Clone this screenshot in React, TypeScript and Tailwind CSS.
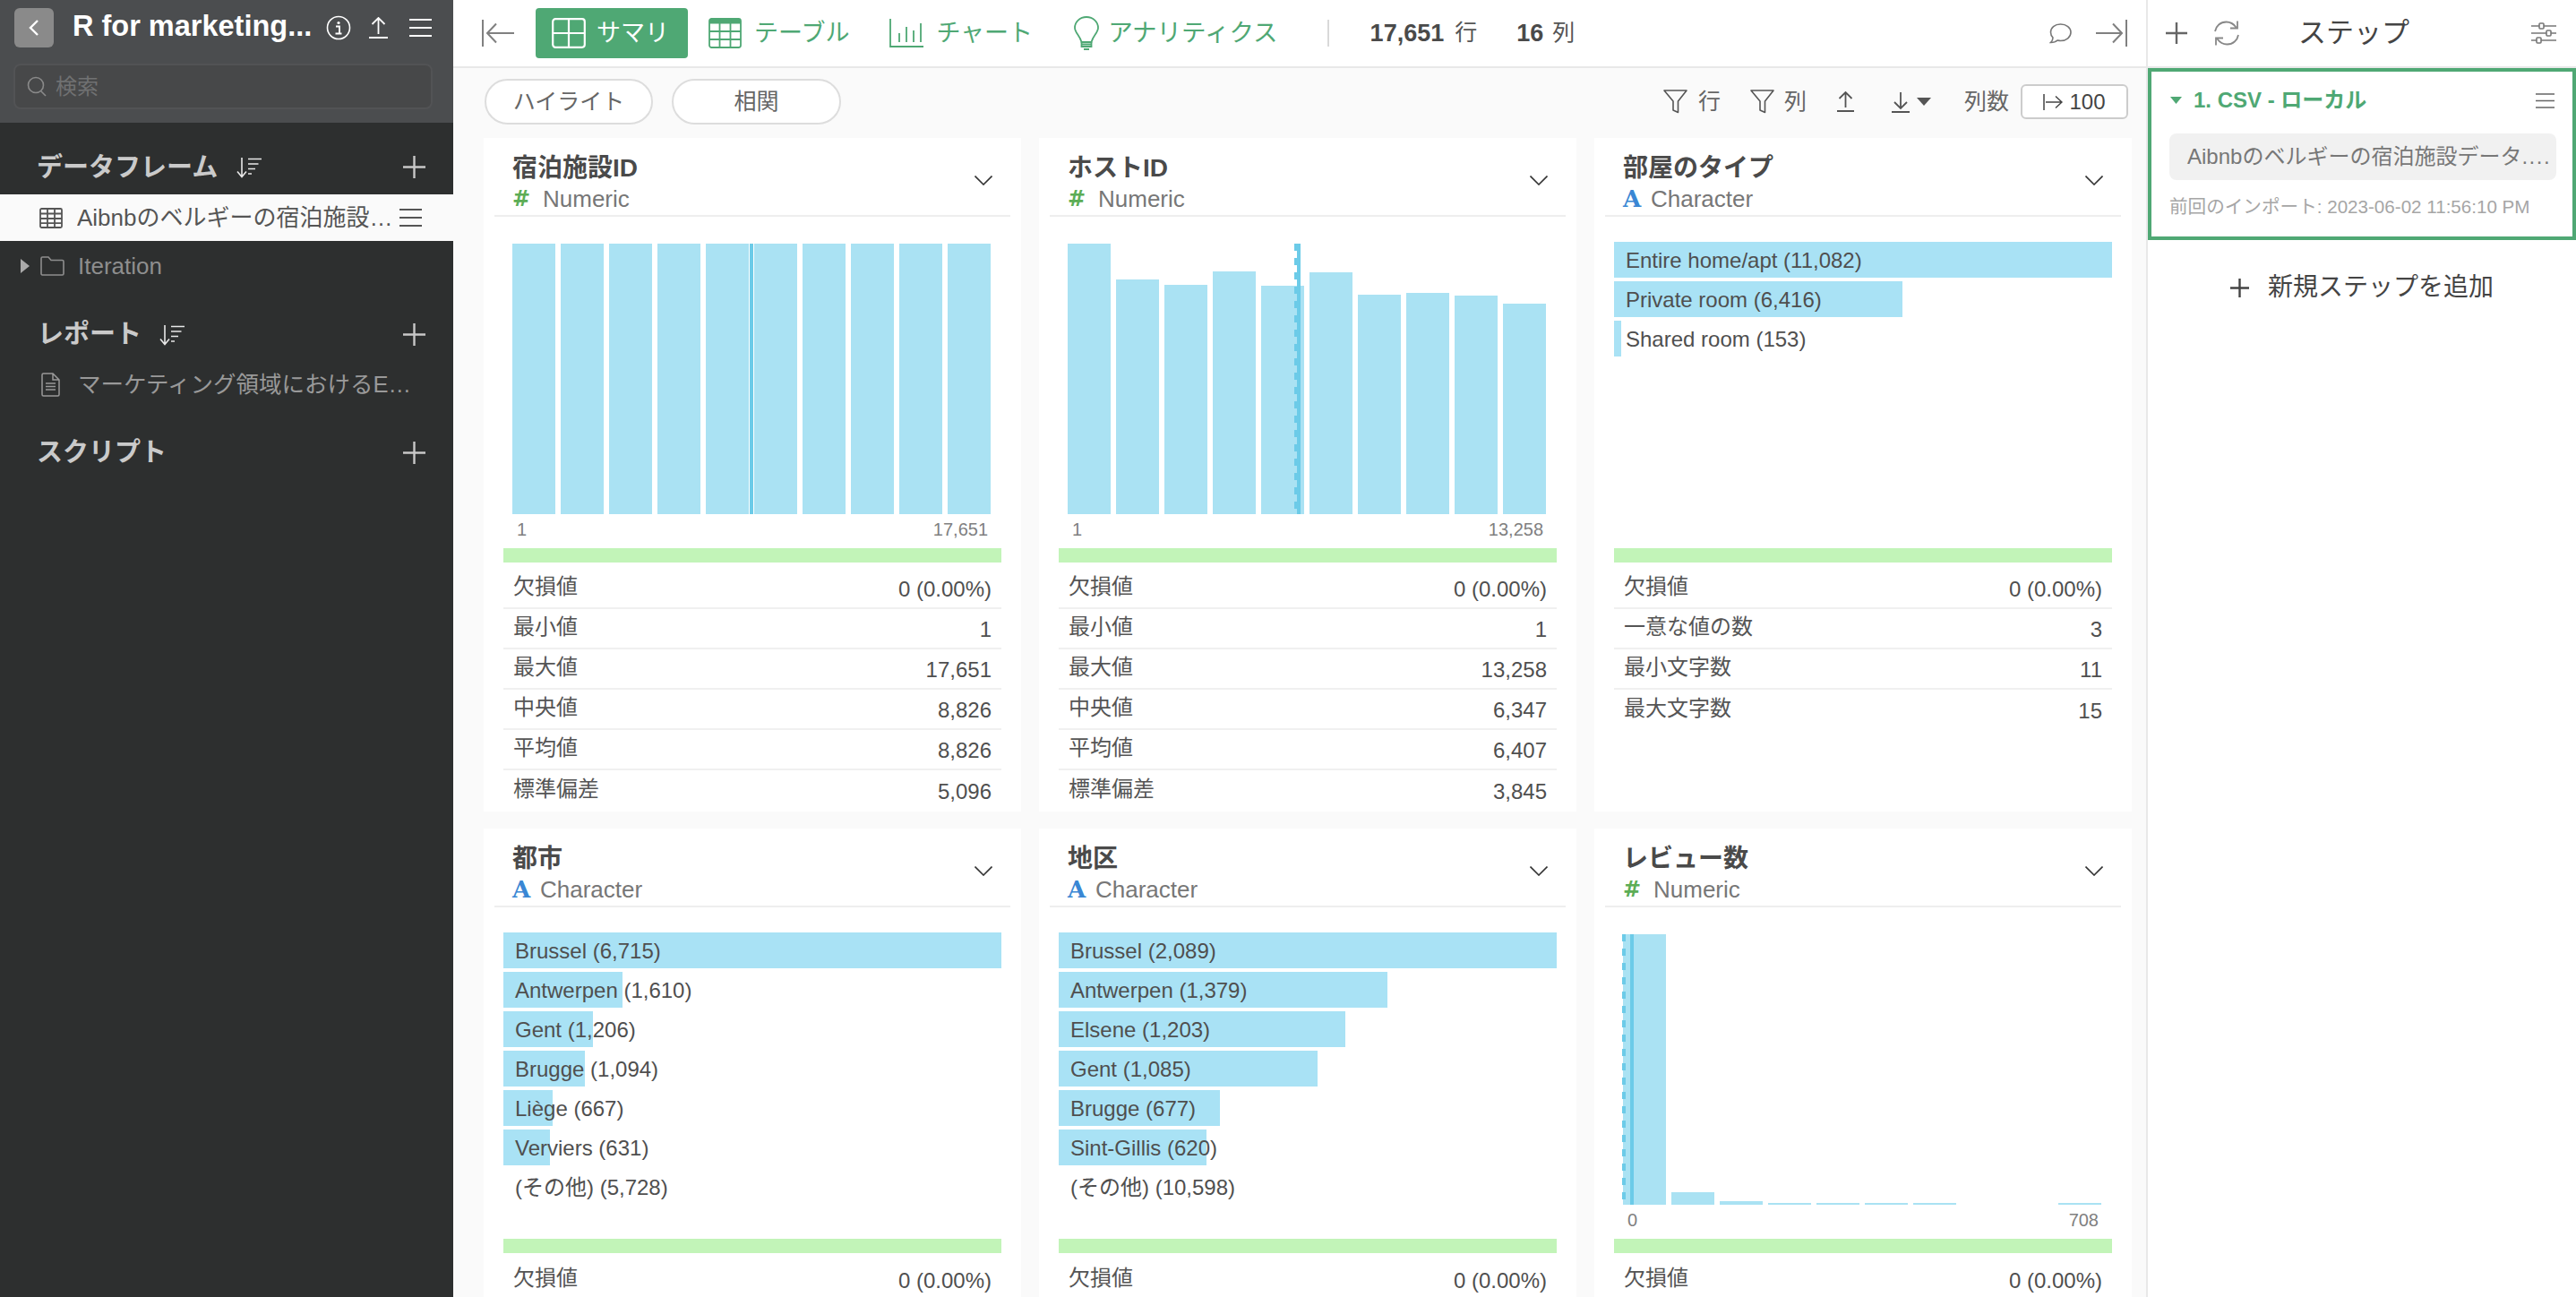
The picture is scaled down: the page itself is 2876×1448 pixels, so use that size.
import React from "react";

const FONT = "font-['Liberation_Sans','Noto_Sans_CJK_JP',sans-serif]";

function Burger({ w = 25, h = 20, c = "#fff", s = 2 }: { w?: number; h?: number; c?: string; s?: number }) {
  return (
    <svg width={w} height={h} viewBox={`0 0 ${w} ${h}`} fill="none" stroke={c} strokeWidth={s} className="shrink-0">
      <path d={`M0 1H${w}M0 ${h / 2}H${w}M0 ${h - 1}H${w}`} />
    </svg>
  );
}

function Plus({ size = 24, c = "#c8c8c8", s = 2.4 }: { size?: number; c?: string; s?: number }) {
  return (
    <svg width={size} height={size} viewBox={`0 0 ${size} ${size}`} fill="none" stroke={c} strokeWidth={s} className="shrink-0">
      <path d={`M${size / 2} 0V${size}M0 ${size / 2}H${size}`} />
    </svg>
  );
}

function SortIcon() {
  return (
    <svg width="28" height="24" viewBox="0 0 28 24" fill="none" stroke="#e8e8e8" strokeWidth="1.6" className="shrink-0">
      <path d="M6 1V22M1 16.5L6 22.5L11 16.5" />
      <path d="M13 2.5H28M13 8H24.5M13 13.5H21M13 19H17" />
    </svg>
  );
}

function UpIcon({ c = "#fff", w = 21, h = 24 }: { c?: string; w?: number; h?: number }) {
  const m = w / 2;
  return (
    <svg width={w} height={h} viewBox={`0 0 ${w} ${h}`} fill="none" stroke={c} strokeWidth="1.8" className="shrink-0">
      <path d={`M0 ${h - 1}H${w}M${m} ${h - 5}V1M${m - 7} 8L${m} 1L${m + 7} 8`} />
    </svg>
  );
}

function DownIcon({ c = "#555" }: { c?: string }) {
  return (
    <svg width="20" height="24" viewBox="0 0 20 24" fill="none" stroke={c} strokeWidth="1.8" className="shrink-0">
      <path d="M0 23H20M10 1V19M3 12L10 19L17 12" />
    </svg>
  );
}

function Funnel() {
  return (
    <svg width="27" height="27" viewBox="0 0 27 27" fill="none" stroke="#555" strokeWidth="1.6" className="shrink-0">
      <path d="M1 1H26L16.5 13V25.5L11 23V13Z" strokeLinejoin="round" />
    </svg>
  );
}

function TypeLine({ type }: { type: "Numeric" | "Character" }) {
  return type === "Numeric" ? (
    <div className="flex items-center h-[28px]">
      <span className="w-[34px] text-[24px] leading-[28px] font-bold text-[#5cad56] font-['DejaVu_Sans',sans-serif]">#</span>
      <span className="text-[26px] leading-[28px] text-[#777777]">Numeric</span>
    </div>
  ) : (
    <div className="flex items-center h-[28px]">
      <span className="w-[31px] text-[26px] leading-[28px] font-bold text-[#3a87d4] font-['DejaVu_Serif',serif]">A</span>
      <span className="text-[26px] leading-[28px] text-[#777777]">Character</span>
    </div>
  );
}

function Histogram({
  bars,
  lo,
  hi,
  solid,
  dash,
}: {
  bars: number[];
  lo: string;
  hi: string;
  solid: number;
  dash: number;
}) {
  return (
    <div className="mx-[32px] pt-[30px] h-[370px]">
      <div className="relative h-[302px] flex items-end gap-[6px]">
        {bars.map((b, i) => (
          <div key={i} className="w-[48px] bg-[#aae2f3]" style={{ height: b }} />
        ))}
        <svg
          width="4"
          height="302"
          className="absolute top-0"
          style={{ left: dash }}
          fill="none"
          stroke="#6ccbe8"
          strokeWidth="8"
        >
          <line x1="2" y1="0" x2="2" y2="302" strokeDasharray="8 8" />
        </svg>
        <div className="absolute top-0 w-[4px] h-[302px] bg-[#6ccbe8]" style={{ left: solid }} />
      </div>
      <div className="flex justify-between px-[5px] pt-[7px] text-[20px] leading-[20px] text-[#808080]">
        <span>{lo}</span>
        <span>{hi}</span>
      </div>
    </div>
  );
}

function BarList({ items, max }: { items: [string, number][]; max: number }) {
  return (
    <div className="mx-[22px] pt-[28px] h-[370px] flex flex-col gap-[4px]">
      {items.map(([label, n]) => (
        <div key={label} className="relative h-[40px] shrink-0 flex items-center">
          <div className="absolute left-0 top-0 h-[40px] bg-[#a9e2f5]" style={{ width: (n / max) * 556 }} />
          <span className="relative pl-[13px] pt-[2px] text-[24px] text-[#4f4f4f] whitespace-nowrap">{label}</span>
        </div>
      ))}
    </div>
  );
}

function Card({
  title,
  type,
  children,
  stats,
}: {
  title: string;
  type: "Numeric" | "Character";
  children: React.ReactNode;
  stats: [string, string][];
}) {
  return (
    <div className="h-[752px] bg-white">
      <div className="mx-[12px] h-[88px] border-b-2 border-[#eeeeee] flex">
        <div className="pl-[20px] pt-[16px] flex-1">
          <div className="text-[28px] leading-[36px] font-bold text-[#4a4a4a] mb-[2px]">{title}</div>
          <TypeLine type={type} />
        </div>
        <div className="pt-[42px] pr-[20px]">
          <svg width="20" height="11" viewBox="0 0 20 11" fill="none" stroke="#333" strokeWidth="1.6">
            <path d="M0.5 0.5L10 10L19.5 0.5" />
          </svg>
        </div>
      </div>
      {children}
      <div className="mx-[22px] h-[16px] bg-[#c2f4b8]" />
      <div className="mx-[22px]">
        {stats.map(([k, v], i) => (
          <div
            key={k}
            className={`flex justify-between items-center px-[11px] text-[24px] text-[#4f4f4f] ${
              i === 0 ? "h-[52px] pt-[7px]" : "h-[45px]"
            } ${i < stats.length - 1 ? "border-b-2 border-[#f0f0f0]" : ""}`}
          >
            <span className="pb-[3px] leading-[32px] text-[#555555]">{k}</span>
            <span className="pt-[3px] leading-[32px]">{v}</span>
          </div>
        ))}
      </div>
    </div>
  );
}

function Sidebar() {
  return (
    <div className="w-[506px] h-full shrink-0 bg-[#2d2f2f]">
      <div className="h-[137px] bg-[#4b4d4f]">
        <div className="flex items-center pt-[9px] pl-[16px] h-[53px]">
          <div className="w-[44px] h-[44px] rounded-md bg-[#8a8a8a] flex items-center justify-center">
            <svg width="12" height="18" viewBox="0 0 12 18" fill="none" stroke="#fff" strokeWidth="2.4">
              <path d="M10 1L2 9L10 17" />
            </svg>
          </div>
          <div className="ml-[21px] w-[267px] text-[32.5px] leading-[40px] font-bold text-white whitespace-nowrap mt-[-4px]">
            R for marketing...
          </div>
          <svg width="28" height="28" viewBox="0 0 28 28" fill="none" className="ml-[16px] shrink-0">
            <circle cx="14" cy="14" r="12.5" stroke="#fff" strokeWidth="1.6" />
            <circle cx="14" cy="8.5" r="1.6" fill="#fff" />
            <path d="M11 12.5H15V20M10.5 20.5H17.5" stroke="#fff" strokeWidth="1.8" />
          </svg>
          <div className="ml-[20px]">
            <UpIcon />
          </div>
          <div className="ml-[24px]">
            <Burger />
          </div>
        </div>
        <div className="mt-[18px] ml-[15px] w-[468px] h-[51px] rounded-lg bg-[#474849] border-2 border-[#525355] flex items-center pl-[13px]">
          <svg width="22" height="24" viewBox="0 0 22 24" fill="none" stroke="#8a8a8a" strokeWidth="1.6" className="shrink-0">
            <circle cx="10" cy="10" r="8.5" />
            <path d="M15.5 16.5L21 22" />
          </svg>
          <span className="ml-[10px] text-[24px] text-[#707172]">検索</span>
        </div>
      </div>

      <div className="mt-[29px] h-[40px] mb-[11px] flex items-center pl-[41px] pr-[31px] text-[#cacaca]">
        <span className="text-[29px] leading-[40px] font-bold mt-[2px]">データフレーム</span>
        <span className="ml-[21px] mt-[2px]">
          <SortIcon />
        </span>
        <span className="ml-auto">
          <Plus size={25} />
        </span>
      </div>
      <div className="h-[52px] bg-[#fafafa] flex items-center pl-[44px] pr-[35px]">
        <svg width="26" height="23" viewBox="0 0 26 23" fill="none" stroke="#555" strokeWidth="1.8" className="shrink-0">
          <rect x="1" y="1" width="24" height="21" rx="1.5" />
          <path d="M1 6.5H25M1 12H25M1 17.2H25M9 1V22M17 1V22" />
        </svg>
        <span className="ml-[16px] flex-1 min-w-0 truncate text-[26px] text-[#555555]">Aibnbのベルギーの宿泊施設データ</span>
        <span className="ml-[6px]">
          <Burger c="#555" />
        </span>
      </div>
      <div className="h-[56px] flex items-center pl-[23px] text-[#8e8e8e]">
        <svg width="10" height="16" viewBox="0 0 10 16" fill="#aaaaaa" className="shrink-0">
          <path d="M0 0L10 8L0 16Z" />
        </svg>
        <svg width="27" height="22" viewBox="0 0 27 22" fill="none" stroke="#8e8e8e" strokeWidth="1.6" className="ml-[12px] shrink-0">
          <path d="M1 20V2.5Q1 1 2.5 1H9L12 4.5H24.5Q26 4.5 26 6V19.5Q26 21 24.5 21H2Z" />
        </svg>
        <span className="ml-[15px] text-[26px]">Iteration</span>
      </div>

      <div className="mt-[28px] h-[40px] flex items-center pl-[42px] pr-[31px] text-[#cacaca]">
        <span className="text-[29px] leading-[40px] font-bold">レポート</span>
        <span className="ml-[20px] mt-[2px]">
          <SortIcon />
        </span>
        <span className="ml-auto">
          <Plus size={25} />
        </span>
      </div>
      <div className="mt-[8px] mb-[1px] h-[56px] flex items-center pl-[46px] pr-[43px] text-[#999999]">
        <svg width="21" height="27" viewBox="0 0 21 27" fill="none" stroke="#999" strokeWidth="1.5" className="shrink-0">
          <path d="M2.5 1H13L20 8V24.5Q20 26 18.5 26H2.5Q1 26 1 24.5V2.5Q1 1 2.5 1ZM13 1V8H20M5 12H16M5 15.5H16M5 19H16" />
        </svg>
        <span className="ml-[20px] flex-1 min-w-0 truncate text-[25.5px]">マーケティング領域におけるEDAの基本を学ぶ</span>
      </div>

      <div className="mt-[28px] h-[40px] flex items-center pl-[41px] pr-[31px] text-[#cacaca]">
        <span className="text-[29px] leading-[40px] font-bold">スクリプト</span>
        <span className="ml-auto">
          <Plus size={25} />
        </span>
      </div>
    </div>
  );
}

const G = "#4fa874";

function TopBar() {
  return (
    <div className="h-[76px] shrink-0 border-b-2 border-[#e8e8e8] bg-white flex items-center pl-[32px] pr-[21px]">
      <svg width="36" height="30" viewBox="0 0 36 30" fill="none" stroke="#808080" strokeWidth="2" className="shrink-0">
        <path d="M1 0V30M36 15H7M16 4.5L6 15L16 25.5" />
      </svg>
      <div className="ml-[24px] w-[170px] h-[56px] rounded-[4px] flex items-center pl-[18px] text-white bg-[#4fa874]">
        <svg width="38" height="34" viewBox="0 0 38 34" fill="none" stroke="#fff" strokeWidth="2.2" className="shrink-0">
          <rect x="1.2" y="1.2" width="35.6" height="31.6" rx="3" />
          <path d="M19 1V33M1 17H37" />
        </svg>
        <span className="ml-[12px] text-[27px] whitespace-nowrap">サマリ</span>
      </div>
      <svg width="37" height="34" viewBox="0 0 37 34" fill="none" stroke={G} strokeWidth="1.8" className="ml-[23px] shrink-0">
        <rect x="1" y="1" width="35" height="32" rx="2.5" />
        <path d="M1 4H36" strokeWidth="5" />
        <path d="M1 15H36M1 24H36M12.5 1V33M24.5 1V33" />
      </svg>
      <span className="ml-[14px] text-[27px] text-[#4fa874] whitespace-nowrap">テーブル</span>
      <svg width="38" height="32" viewBox="0 0 38 32" fill="none" stroke={G} strokeWidth="1.8" className="ml-[45px] shrink-0">
        <path d="M1 0V31H38M11 16V26M19 9V26M27 13V26M35 5V26" />
      </svg>
      <span className="ml-[14px] text-[27px] text-[#4fa874] whitespace-nowrap">チャート</span>
      <svg width="28" height="38" viewBox="0 0 28 38" fill="none" stroke={G} strokeWidth="1.8" className="ml-[46px] shrink-0">
        <path d="M14 1C6.5 1 1 6.5 1 13C1 18.5 6.5 21.5 8.5 29H19.5C21.5 21.5 27 18.5 27 13C27 6.5 21.5 1 14 1Z" />
        <path d="M8.5 29V34H19.5V29M8.5 31.5H19.5M11 37H17" />
      </svg>
      <span className="ml-[10px] text-[27.5px] text-[#4fa874] whitespace-nowrap">アナリティクス</span>
      <div className="ml-[55px] w-[2px] h-[30px] bg-[#d9d9d9] shrink-0" />
      <span className="ml-[46px] text-[27px] font-bold text-[#4a4a4a] whitespace-nowrap">17,651</span>
      <span className="ml-[12px] text-[25px] text-[#555555]">行</span>
      <span className="ml-[44px] text-[27px] font-bold text-[#4a4a4a] whitespace-nowrap">16</span>
      <span className="ml-[10px] text-[25px] text-[#555555]">列</span>
      <svg width="25" height="23" viewBox="0 0 25 23" fill="none" stroke="#777" strokeWidth="1.6" className="ml-auto shrink-0">
        <path d="M12.5 1C6 1 1.5 5 1.5 10C1.5 12.5 2.5 14.5 4 16C4 18 3 20 1.5 21.5C5 21.5 7.5 20.5 9 19C10 19.2 11.2 19.5 12.5 19.5C19 19.5 24 15.5 24 10C24 5 19 1 12.5 1Z" />
      </svg>
      <svg width="35" height="30" viewBox="0 0 35 30" fill="none" stroke="#808080" strokeWidth="2" className="ml-[27px] shrink-0">
        <path d="M34 0V30M0 15H28M19 4.5L29 15L19 25.5" />
      </svg>
    </div>
  );
}

function Toolbar() {
  return (
    <div className="h-[78px] shrink-0 pl-[35px] pr-[20px] pt-[12px]">
      <div className="flex items-center h-[51px] text-[#666666]">
        <div className="w-[188px] h-[51px] rounded-full border-2 border-[#dddddd] bg-white flex items-center justify-center text-[25px]">
          ハイライト
        </div>
        <div className="ml-[21px] w-[189px] h-[51px] rounded-full border-2 border-[#dddddd] bg-white flex items-center justify-center text-[25px]">
          相関
        </div>
        <div className="ml-auto">
          <Funnel />
        </div>
        <span className="ml-[12px] text-[25px]">行</span>
        <div className="ml-[33px]">
          <Funnel />
        </div>
        <span className="ml-[11px] text-[25px]">列</span>
        <div className="ml-[34px]">
          <UpIcon c="#555" w={19} h={23} />
        </div>
        <div className="ml-[42px]">
          <DownIcon />
        </div>
        <svg width="16" height="9" viewBox="0 0 16 9" fill="#555" className="ml-[8px] shrink-0">
          <path d="M0 0H16L8 9Z" />
        </svg>
        <span className="ml-[37px] text-[25px] whitespace-nowrap">列数</span>
        <div className="ml-[13px] w-[120px] h-[39px] rounded-md border-2 border-[#cccccc] bg-white flex items-center justify-center text-[24px] text-[#444444]">
          <svg width="22" height="18" viewBox="0 0 22 18" fill="none" stroke="#444" strokeWidth="1.5" className="shrink-0">
            <path d="M1 0V18M3 9H21M14 2.5L21 9L14 15.5" />
          </svg>
          <span className="ml-[7px]">100</span>
        </div>
      </div>
    </div>
  );
}

function StepsPanel() {
  return (
    <div className="w-[480px] h-full shrink-0 bg-white border-l-2 border-[#e8e8e8]">
      <div className="h-[76px] border-b-2 border-[#e8e8e8] flex items-center pl-[20px] pr-[22px]">
        <Plus size={24} c="#666" s={2.4} />
        <svg width="30" height="30" viewBox="0 0 30 30" fill="none" stroke="#888" strokeWidth="1.8" className="ml-[29px] shrink-0">
          <path d="M2 13C3 7 8 2.5 14.5 2.5C19 2.5 23 5 25.5 8.5M27 1.5V9.5H19" />
          <path d="M28 17C27 23 22 27.5 15.5 27.5C11 27.5 7 25 4.5 21.5M3 28.5V20.5H11" />
        </svg>
        <span className="ml-[65px] text-[31px] text-[#444444] whitespace-nowrap">ステップ</span>
        <svg width="28" height="24" viewBox="0 0 28 24" fill="none" stroke="#777" strokeWidth="1.6" className="ml-auto shrink-0">
          <path d="M0 4H9M14 4H28M0 12H17M22 12H28M0 20H6M11 20H28" />
          <rect x="9" y="1" width="5" height="6" rx="1" />
          <rect x="17" y="9" width="5" height="6" rx="1" />
          <rect x="6" y="17" width="5" height="6" rx="1" />
        </svg>
      </div>
      <div className="h-[192px] border-4 border-[#4fa874]">
        <div className="h-[64px] flex items-center pl-[21px] pr-[20px]">
          <svg width="13" height="8" viewBox="0 0 13 8" fill="#4fa874" className="shrink-0">
            <path d="M0 0H13L6.5 8Z" />
          </svg>
          <span className="ml-[13px] text-[24px] font-bold text-[#4fa874] whitespace-nowrap">1. CSV - ローカル</span>
          <span className="ml-auto">
            <Burger w={21} h={17} c="#666" s={1.6} />
          </span>
        </div>
        <div className="mt-[5px] ml-[20px] w-[432px] h-[52px] rounded-lg bg-[#f1f1f1] flex items-center pl-[20px] text-[24px] text-[#777777] whitespace-nowrap overflow-hidden">
          <span>
            Aibnbのベルギーの宿泊施設データ<span className="tracking-[1.5px]">....</span>
          </span>
        </div>
        <div className="mt-[18px] ml-[20px] h-[24px] flex items-center text-[20.6px] text-[#a6a6a6] whitespace-nowrap">
          前回のインポート: 2023-06-02 11:56:10 PM
        </div>
      </div>
      <div className="h-[106px] flex items-center justify-center text-[28px] text-[#444444]">
        <Plus size={21} c="#444" s={2.4} />
        <span className="ml-[21px] whitespace-nowrap">新規ステップを追加</span>
      </div>
    </div>
  );
}

const MISS: [string, string] = ["欠損値", "0 (0.00%)"];

export default function App() {
  return (
    <div className={`${FONT} w-[2876px] h-[1448px] flex overflow-hidden bg-[#fafafa]`}>
      <Sidebar />
      <div className="w-[1890px] h-full shrink-0 flex flex-col overflow-hidden">
        <TopBar />
        <Toolbar />
        <div className="pl-[34px] grid grid-cols-[600px_600px_600px] gap-x-[20px] gap-y-[19px]">
          <Card
            title="宿泊施設ID"
            type="Numeric"
            stats={[MISS, ["最小値", "1"], ["最大値", "17,651"], ["中央値", "8,826"], ["平均値", "8,826"], ["標準偏差", "5,096"]]}
          >
            <Histogram bars={[302, 302, 302, 302, 302, 302, 302, 302, 302, 302]} lo="1" hi="17,651" solid={265} dash={265} />
          </Card>
          <Card
            title="ホストID"
            type="Numeric"
            stats={[MISS, ["最小値", "1"], ["最大値", "13,258"], ["中央値", "6,347"], ["平均値", "6,407"], ["標準偏差", "3,845"]]}
          >
            <Histogram bars={[302, 262, 256, 271, 255, 270, 245, 247, 244, 235]} lo="1" hi="13,258" solid={256} dash={253} />
          </Card>
          <Card
            title="部屋のタイプ"
            type="Character"
            stats={[MISS, ["一意な値の数", "3"], ["最小文字数", "11"], ["最大文字数", "15"]]}
          >
            <BarList
              max={11082}
              items={[
                ["Entire home/apt (11,082)", 11082],
                ["Private room (6,416)", 6416],
                ["Shared room (153)", 153],
              ]}
            />
          </Card>
          <Card title="都市" type="Character" stats={[MISS]}>
            <BarList
              max={6715}
              items={[
                ["Brussel (6,715)", 6715],
                ["Antwerpen (1,610)", 1610],
                ["Gent (1,206)", 1206],
                ["Brugge (1,094)", 1094],
                ["Liège (667)", 667],
                ["Verviers (631)", 631],
                ["(その他) (5,728)", 0],
              ]}
            />
          </Card>
          <Card title="地区" type="Character" stats={[MISS]}>
            <BarList
              max={2089}
              items={[
                ["Brussel (2,089)", 2089],
                ["Antwerpen (1,379)", 1379],
                ["Elsene (1,203)", 1203],
                ["Gent (1,085)", 1085],
                ["Brugge (677)", 677],
                ["Sint-Gillis (620)", 620],
                ["(その他) (10,598)", 0],
              ]}
            />
          </Card>
          <Card title="レビュー数" type="Numeric" stats={[MISS]}>
            <Histogram bars={[302, 14, 4, 2, 2, 2, 2, 0, 0, 2]} lo="0" hi="708" solid={8} dash={-1} />
          </Card>
        </div>
      </div>
      <StepsPanel />
    </div>
  );
}
